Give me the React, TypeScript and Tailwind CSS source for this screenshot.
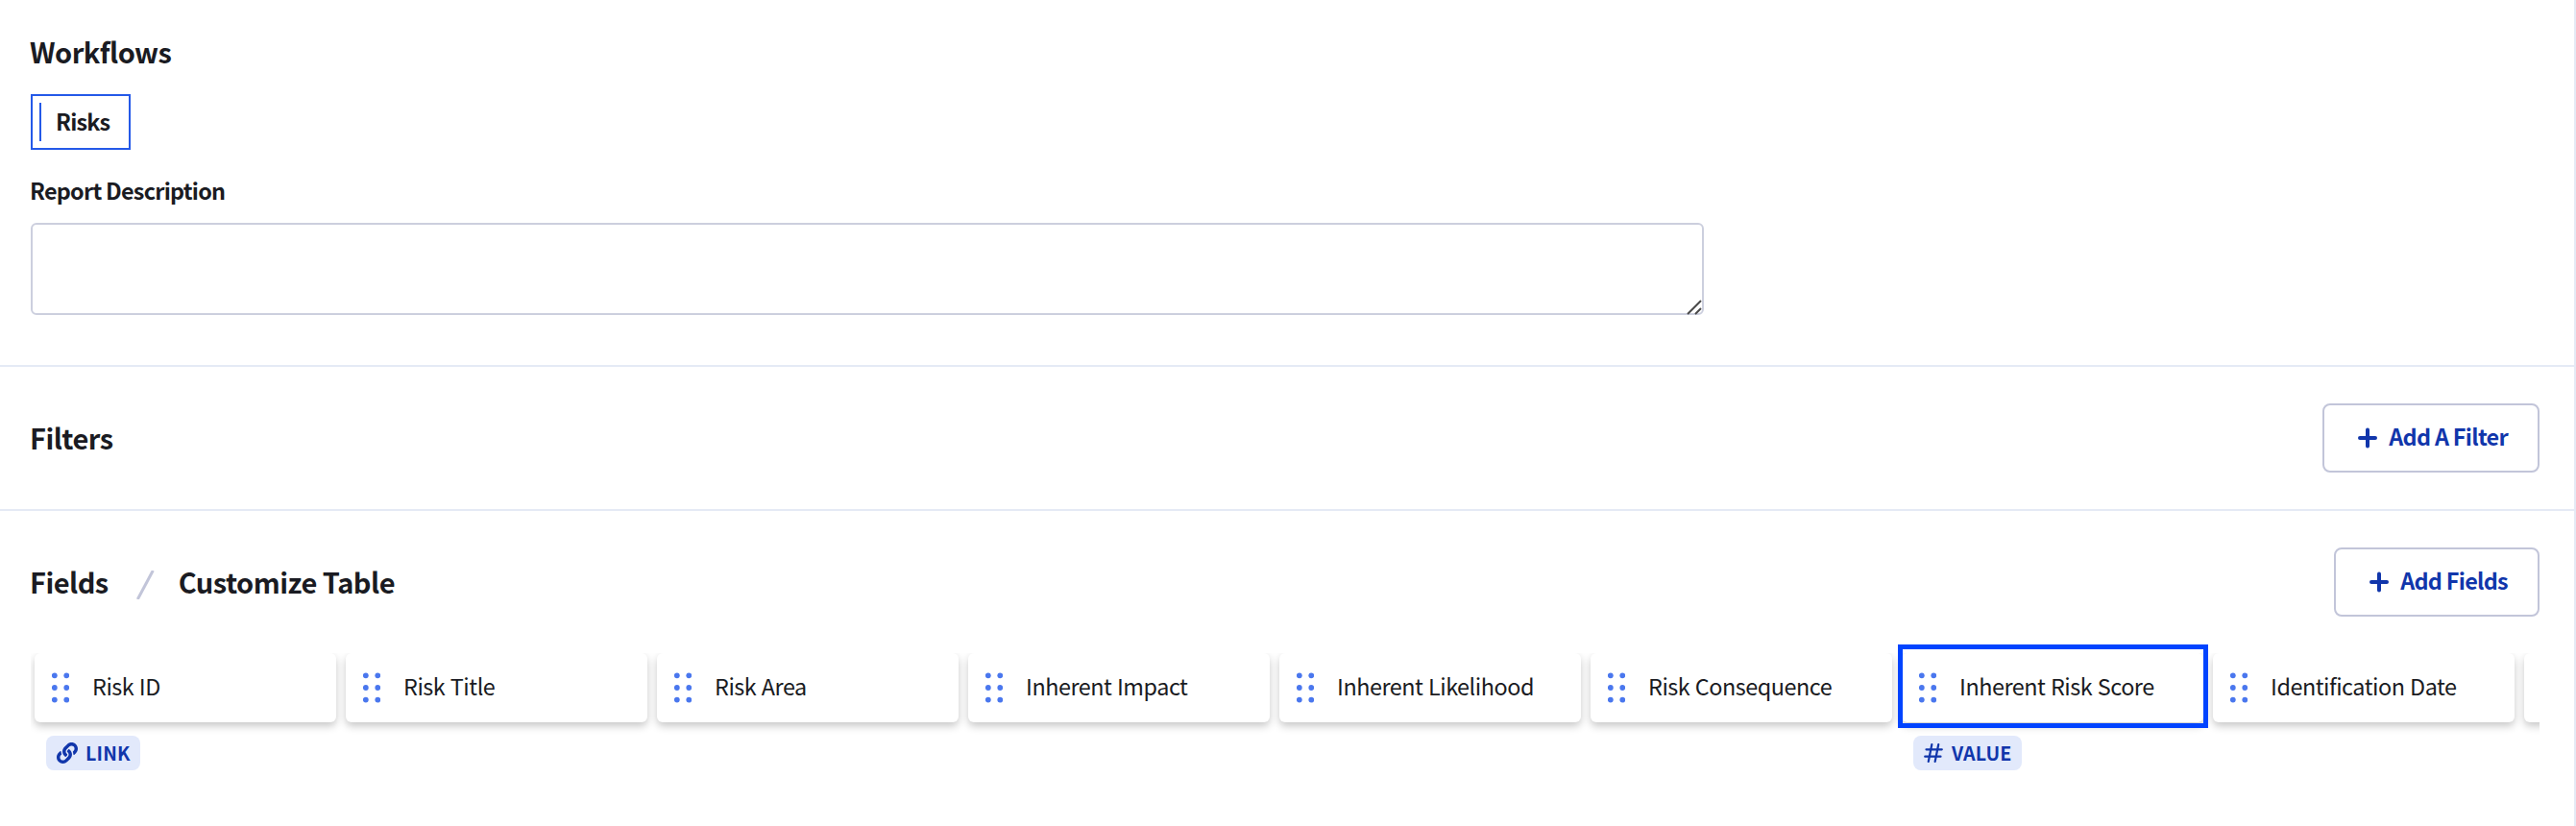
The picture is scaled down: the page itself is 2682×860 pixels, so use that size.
import type { ReactNode } from "react"
import { FaLink } from "react-icons/fa"

interface Field {
  name: string
  tag?: "link" | "value"
}

const fields: Field[] = [
  { name: "Risk ID", tag: "link" },
  { name: "Risk Title" },
  { name: "Risk Area" },
  { name: "Inherent Impact" },
  { name: "Inherent Likelihood" },
  { name: "Risk Consequence" },
  { name: "Inherent Risk Score", tag: "value" },
  { name: "Identification Date" },
  { name: "" },
]

function PlusIcon() {
  return (
    <svg className="h-[22px] w-5 shrink-0" viewBox="0 0 20 22" fill="none" stroke="currentColor" strokeWidth="4" strokeLinecap="round">
      <path d="M10 2.5v17M2 11h16" />
    </svg>
  )
}

function HashIcon() {
  return (
    <svg className="h-5 w-5 shrink-0" viewBox="0 0 20 20" fill="none" stroke="currentColor" strokeWidth="2.2" strokeLinecap="round">
      <path d="M8.3 1.2 4.8 18.8M15.2 1.2 11.7 18.8M2.5 6.3h16.3M1.2 13.7h16.3" />
    </svg>
  )
}

function DragHandle() {
  return (
    <svg className="h-8 w-[18px] shrink-0 fill-[#4a77ee]" viewBox="0 0 18 32">
      {[3.3, 16, 28.6].map((y) => (
        <g key={y}>
          <circle cx="2.8" cy={y} r="2.9" />
          <circle cx="15.3" cy={y} r="2.9" />
        </g>
      ))}
    </svg>
  )
}

function SectionTitle({ children }: { children: ReactNode }) {
  return (
    <h2 className="-ml-px pb-0.5 text-[29px] leading-10 font-bold tracking-[-0.52px] whitespace-nowrap">{children}</h2>
  )
}

function AddButton({ label }: { label: string }) {
  return (
    <button className="flex h-[72px] items-center gap-3 rounded-lg border-2 border-[#c2c5d9] pr-[31px] pl-[35px] text-[23.4px] font-bold tracking-[-0.7px] whitespace-nowrap text-[#1136ab]">
      <PlusIcon />
      <span className="pb-0.5">{label}</span>
    </button>
  )
}

function Tag({ type }: { type: "link" | "value" }) {
  return (
    <div className="ml-3 flex h-9 w-fit items-center gap-[9px] rounded-lg bg-[#e2e9fb] pr-2.5 pl-[11px] text-[19.6px] leading-9 font-bold tracking-[0.2px] text-[#1136ab]">
      {type === "link" ? <FaLink className="size-[22px]" /> : <HashIcon />}
      <span className={type === "link" ? "-ml-px" : ""}>{type === "link" ? "LINK" : "VALUE"}</span>
    </div>
  )
}

function FieldCard({ field }: { field: Field }) {
  return (
    <div className="w-[314px] shrink-0">
      <div className="mb-3.5 flex h-[72px] items-center gap-6 rounded-md bg-white pl-[18px] shadow-[0_4px_8px_rgba(0,0,0,0.22)]">
        {field.name && <DragHandle />}
        <span className="pb-0.5 text-[23.4px] tracking-[-0.47px] [word-spacing:0.8px] whitespace-nowrap">{field.name}</span>
      </div>
      {field.tag && <Tag type={field.tag} />}
    </div>
  )
}

export default function App() {
  return (
    <div className="h-[860px] w-[2682px] overflow-hidden border-r-2 border-[#e5eaf5] bg-white font-['Noto_Sans_CJK_SC','Open_Sans',sans-serif] text-[#1a1b22]">
      <section className="h-[382px] border-b-2 border-[#e5eaf5] px-8 pt-[33px]">
        <SectionTitle>Workflows</SectionTitle>
        <div className="mt-[23px] flex h-[58px] w-[104px] items-center border-2 border-[#2459e8] pl-[7px]">
          <div className="h-10 w-0.5 bg-[#2459e8]" />
          <span className="ml-[15px] text-[23.4px] font-bold tracking-[-0.8px]">Risks</span>
        </div>
        <label htmlFor="description" className="mt-6 -ml-px block text-[23.4px] leading-9 font-bold tracking-[-0.75px]">
          Report Description
        </label>
        <div className="relative mt-4 h-24 w-[1742px]">
          <textarea id="description" className="block h-full w-full resize-none rounded-md border-2 border-[#cccfde]" />
          <svg className="absolute right-0.5 bottom-0 h-4 w-4" viewBox="0 0 16 16" fill="none" stroke="#4a4a4a" strokeWidth="2">
            <path d="M1 15 15 1M9 15l6-6" />
          </svg>
        </div>
      </section>

      <section className="flex h-[150px] items-center justify-between border-b-2 border-[#e5eaf5] pr-9 pl-8">
        <SectionTitle>Filters</SectionTitle>
        <AddButton label="Add A Filter" />
      </section>

      <section className="pr-9 pl-8">
        <div className="flex h-[148px] items-center justify-between">
          <div className="flex items-center">
            <SectionTitle>Fields</SectionTitle>
            <svg className="mt-1.5 mr-[26px] ml-7 h-[30px] w-5" viewBox="0 0 20 30" fill="none" stroke="#c2c5d9" strokeWidth="3">
              <path d="M2.3 30 18.3 0" />
            </svg>
            <SectionTitle>Customize Table</SectionTitle>
          </div>
          <AddButton label="Add Fields" />
        </div>
        <div className="relative">
          <div className="flex h-[150px] gap-2.5 overflow-hidden pl-1">
            {fields.map((field, i) => (
              <FieldCard key={i} field={field} />
            ))}
          </div>
          {/* selection ring sits outside the clipped row */}
          <div className="pointer-events-none absolute -top-[9px] left-[1944px] h-[87px] w-[323px] border-5 border-[#0044ff]" />
        </div>
      </section>
    </div>
  )
}
